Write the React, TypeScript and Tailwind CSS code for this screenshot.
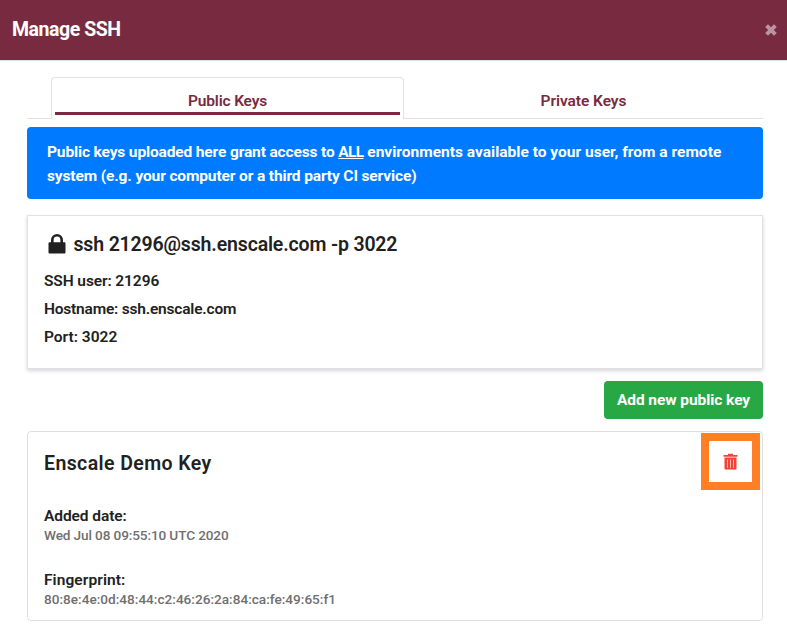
import type { ReactNode } from "react";

function CloseIcon() {
  return (
    <svg viewBox="0 0 12 12" className="size-3" fill="none" stroke="#bb949f" strokeWidth="4">
      <path d="M1.6 1.6 10.4 10.4M10.4 1.6 1.6 10.4" />
    </svg>
  );
}

function LockIcon() {
  return (
    <svg viewBox="0 0 18 20" className="h-5 w-[18px]" fill="#212121">
      <path
        fillRule="evenodd"
        d="M3 8.3V5.8a6 5.8 0 0 1 12 0v2.5h1.2c.8 0 1.3.5 1.3 1.3v8.6c0 .8-.5 1.3-1.3 1.3H1.8c-.8 0-1.3-.5-1.3-1.3V9.6c0-.8.5-1.3 1.3-1.3zm2.6 0h6.8V5.8a3.4 3.4 0 0 0-6.8 0z"
      />
    </svg>
  );
}

function TrashIcon() {
  return (
    <svg viewBox="0 0 15 17" className="h-[17px] w-[15px]">
      <path fill="#f44336" d="M5 .8h5V2h4.5v1.8H.5V2H5z" />
      <path fill="#f44336" d="M1.5 4.6h12v10.8a1.2 1.2 0 0 1-1.2 1.2H2.7a1.2 1.2 0 0 1-1.2-1.2z" />
      <path stroke="#fbc0bb" strokeWidth="1" d="M4.5 6.5v8.3M7.5 6.5v8.3M10.5 6.5v8.3" />
    </svg>
  );
}

function Detail({ label, children }: { label: ReactNode; children: ReactNode }) {
  return (
    <div className="mb-6">
      <div className="h-[19px] text-[15.5px] leading-5">{label}</div>
      <div className="h-[21px] text-[13.6px] font-medium leading-5 text-[#6f6f6f]">{children}</div>
    </div>
  );
}

export default function App() {
  return (
    <div className="h-[632px] w-[787px] overflow-hidden bg-white font-['Roboto','Liberation_Sans',sans-serif] text-[15.5px] font-semibold text-[#212121]">
      <header className="flex h-[61px] items-center justify-between border-b border-[#dee2e6] bg-[#782b40] pr-[10px] pl-3">
        <h1 className="text-[19.5px] font-bold tracking-[-0.45px] text-white">Manage SSH</h1>
        <button aria-label="Close" className="-mt-px"><CloseIcon /></button>
      </header>
      <main className="px-6 pl-[27px] pt-4">
        <nav className="flex h-[42px] text-[#782b40]">
          <div className="w-6 border-b border-[#dee2e6]" />
          <button className="flex w-[353px] flex-col rounded-t border border-b-0 border-[#dee2e6] px-[3px] pt-[11px]">
            <span className="h-[26px] w-full border-b-3 border-[#782b40] text-center leading-6 tracking-[-0.15px]">Public Keys</span>
          </button>
          <button className="flex flex-1 justify-center border-b border-[#dee2e6] pt-3">
            <span className="leading-6 tracking-[-0.05px]">Private Keys</span>
          </button>
        </nav>
        <div className="mt-2 h-[72px] rounded bg-[#007bff] pt-[13px] pl-5 font-bold leading-6 text-white">
          <p className="whitespace-nowrap">
            <span className="tracking-[-0.14px]">Public keys uploaded here grant access to </span>
            <u className="tracking-[-0.7px]">ALL</u>
            <span className="tracking-[0.01px]"> environments available to your user, from a remote</span>
          </p>
          <p className="whitespace-nowrap tracking-[-0.13px]">system (e.g. your computer or a third party CI service)</p>
        </div>
        <section className="mt-4 h-[154px] border border-[#dee2e6] px-4 pt-[17px] shadow-[0_2px_4px_rgba(0,0,0,0.16)]">
          <h2 className="mb-[11px] flex h-6 items-center text-[19.5px] leading-6 tracking-[-0.16px]">
            <span className="-mt-[3px] mr-2 ml-[3.5px]"><LockIcon /></span>
            ssh 21296@ssh.enscale.com -p 3022
          </h2>
          <p className="h-7 leading-[26px] tracking-[-0.1px]">SSH user: 21296</p>
          <p className="h-7 leading-[26px] tracking-[-0.2px]">Hostname: ssh.enscale.com</p>
          <p className="h-7 leading-[26px]">Port: 3022</p>
        </section>
        <div className="mt-3 flex justify-end">
          <button className="h-[38px] w-[159px] rounded bg-[#28a745] pt-[2px] font-bold tracking-[-0.07px] text-white">Add new public key</button>
        </div>
        <section className="relative mt-3 h-[190px] rounded border border-[#dfdfdf] px-4 pt-5">
          <h2 className="mb-[30px] h-6 text-[19.5px] leading-6 tracking-[0.4px]">Enscale Demo Key</h2>
          <Detail label={<span className="tracking-[-0.08px]">Added date:</span>}>
            <span className="tracking-[-0.12px]">Wed Jul 08 09:55:10 UTC 2020</span>
          </Detail>
          <Detail label={<span className="tracking-[0.08px]">Fingerprint:</span>}>
            <span className="tracking-[0.01px]">80:8e:4e:0d:48:44:c2:46:26:2a:84:ca:fe:49:65:f1</span>
          </Detail>
          <button aria-label="Delete key" className="absolute top-px right-0.5 flex h-[57px] w-[59px] items-center justify-center border-8 border-[#ff7f27] bg-white">
            <TrashIcon />
          </button>
        </section>
      </main>
    </div>
  );
}
